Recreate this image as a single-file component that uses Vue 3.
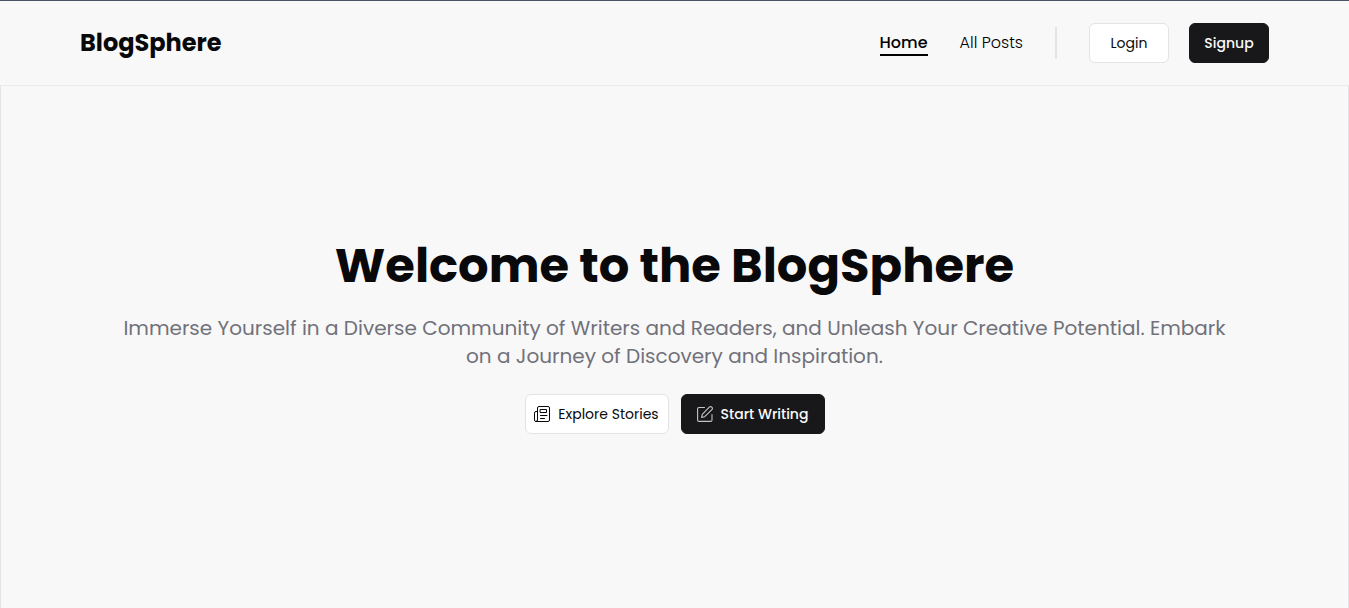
<script setup>
const links = [
  { label: 'Home', active: true },
  { label: 'All Posts', active: false }
]
</script>

<template>
  <div class="page">
    <header class="header">
      <a class="brand" href="#">BlogSphere</a>
      <nav class="nav">
        <a
          v-for="link in links"
          :key="link.label"
          href="#"
          class="link"
          :class="{ active: link.active }"
        >{{ link.label }}</a>
        <span class="divider"></span>
        <div class="account">
          <button type="button" class="btn small light">Login</button>
          <button type="button" class="btn small dark">Signup</button>
        </div>
      </nav>
    </header>
    <main class="hero">
      <h1>Welcome to the BlogSphere</h1>
      <p>
        Immerse Yourself in a Diverse Community of Writers and Readers, and
        Unleash Your Creative Potential. Embark on a Journey of Discovery and
        Inspiration.
      </p>
      <div class="actions">
        <button type="button" class="btn wide light">
          <svg width="16" height="16" viewBox="0 0 16 16" fill="none" stroke="currentColor" stroke-linecap="round" stroke-linejoin="round" aria-hidden="true">
            <path d="M3.500 14V2Q3.500 .5 5 .5H14Q15.500 .5 15.500 2V14Q15.500 15.500 14 15.500H2Q.5 15.500 .5 14V7Q.5 5.500 2 5.500H3.500M3.500 14Q3.500 15.500 2 15.500" />
            <rect x="6.500" y="3.500" width="6" height="3" />
            <path d="M6.500 9.500H13M6.500 12.500H10.500" />
          </svg>
          Explore Stories
        </button>
        <button type="button" class="btn wide dark">
          <svg class="muted" width="16" height="16" viewBox="0 0 16 16" fill="none" stroke="currentColor" stroke-width="1.1" stroke-linecap="round" stroke-linejoin="round" aria-hidden="true">
            <path d="M7.500 1.500H2Q.6 1.500 .6 3V14Q.6 15.400 2 15.400H13.500Q15 15.400 15 14V8.500" />
            <path d="M4.600 11.400L5.300 8.400L12.300 1.200Q13.500 .1 14.800 1.200Q16 2.500 14.900 3.700L7.700 10.700Z" />
          </svg>
          Start Writing
        </button>
      </div>
    </main>
  </div>
</template>

<style>
body {
  background: #f8f8f8;
}
</style>

<style scoped>
.page {
  display: flex;
  flex-direction: column;
  box-sizing: border-box;
  min-height: 100vh;
  border-top: 1px solid #4b5563;
  background: #f8f8f8;
  color: #09090b;
  font-family: Poppins, Inter, "Liberation Sans", sans-serif;
}
.header {
  display: flex;
  align-items: center;
  justify-content: space-between;
  padding: 22px 80px;
  border-bottom: 1px solid #ebebeb;
}
.brand {
  color: inherit;
  font-size: 24px;
  line-height: 32px;
  font-weight: 700;
  text-decoration: none;
}
.nav {
  display: flex;
  align-items: center;
  gap: 32px;
}
.link {
  padding-top: 2px;
  color: #000;
  font-size: 16px;
  line-height: 22px;
  font-weight: 300;
  text-decoration: none;
  border-bottom: 2px solid transparent;
}
.link.active {
  font-weight: 500;
  border-bottom-color: #000;
}
.divider {
  width: 2px;
  height: 32px;
  background: #e4e4e7;
}
.account {
  display: flex;
  gap: 20px;
}
.btn {
  display: flex;
  align-items: center;
  justify-content: center;
  gap: 8px;
  box-sizing: border-box;
  height: 40px;
  padding: 0;
  border: 1px solid #e4e4e7;
  border-radius: 6px;
  font-family: inherit;
  font-size: 14px;
  line-height: 20px;
  white-space: nowrap;
}
.small {
  width: 80px;
}
.wide {
  width: 144px;
}
.light {
  background: #fff;
  color: #09090b;
  font-weight: 400;
}
.dark {
  background: #18181b;
  border-color: #18181b;
  color: #fafafa;
  font-weight: 500;
}
.muted {
  color: #c4c4c6;
}
.hero {
  display: flex;
  flex: 1;
  flex-direction: column;
  align-items: center;
  justify-content: center;
  padding: 0 112px 24px;
  border: 1px solid #e4e4e7;
  border-width: 0 1px;
  text-align: center;
}
h1 {
  margin: 0;
  font-size: 48px;
  line-height: 60px;
  font-weight: 700;
}
p {
  margin: 18px 0 24px;
  color: #71717a;
  font-size: 20px;
  line-height: 28px;
  font-weight: 400;
}
.actions {
  display: flex;
  gap: 12px;
}
</style>
